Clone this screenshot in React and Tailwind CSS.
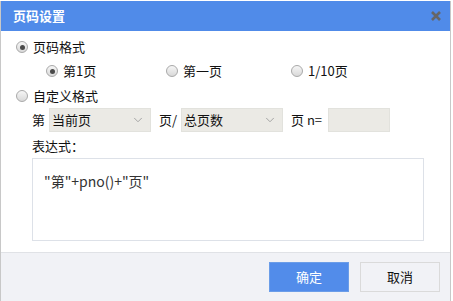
import React from "react";
import { ChevronDown } from "lucide-react";

const font = { fontFamily: '"Noto Sans CJK SC", "Microsoft YaHei", sans-serif' };

function Radio({ checked, label, className = "" }) {
  return (
    <label className={`flex items-center gap-[5px] h-5 ${className}`}>
      <span className="relative flex items-center justify-center w-[12px] h-[12px] rounded-full border border-[#a9a9a9] bg-gradient-to-b from-[#f6f6f6] to-[#d9d9d9]">
        {checked && <span className="w-[5px] h-[5px] rounded-full bg-[#4a4a4a]" />}
      </span>
      <span className="text-[13px] text-[#111] leading-5">{label}</span>
    </label>
  );
}

function Select({ value, className = "" }) {
  return (
    <div className={`flex items-center justify-between h-6 pl-[2px] pr-[5px] bg-[#ebeae5] border border-[#e2e2dd] ${className}`}>
      <span className="text-[13px] text-[#111]">{value}</span>
      <ChevronDown className="w-[14px] h-[14px] text-[#9a9a9a]" strokeWidth={1.5} />
    </div>
  );
}

export default function App() {
  return (
    <div className="w-[453px] h-[301px] bg-white overflow-hidden pt-px" style={font}>
      <div className="w-[451px] h-[300px] flex flex-col border-x border-[#c8c8c8]">
        {/* Title */}
        <div className="h-[30px] shrink-0 flex items-center justify-between bg-[#508be9] pl-[12px] pr-[9px]">
          <span className="text-white font-bold text-[13px]">页码设置</span>
          <svg width="10" height="10" viewBox="0 0 10 10">
            <path d="M1 1L9 9M9 1L1 9" stroke="#666" strokeWidth="2.6" />
          </svg>
        </div>

        {/* Body */}
        <div className="flex-1 flex flex-col bg-white pt-[6px] pl-[15px]">
          <Radio checked label="页码格式" />
          <div className="flex mt-[4px] pl-[30px]">
            <Radio checked label="第1页" className="w-[120px]" />
            <Radio label="第一页" className="w-[125px]" />
            <Radio label="1/10页" />
          </div>
          <Radio label="自定义格式" className="mt-[5px]" />
          <div className="flex items-center mt-[2px] pl-[16px] text-[13px] text-[#111]">
            <span className="w-[17px]">第</span>
            <Select value="当前页" className="w-[102px]" />
            <span className="ml-[8px] w-[22px]">页/</span>
            <Select value="总页数" className="w-[102px]" />
            <span className="ml-[8px] w-[37px]">页 n=</span>
            <div className="w-[62px] h-6 bg-[#ebeae5] border border-[#e2e2dd]" />
          </div>
          <div className="mt-[4px] pl-[16px] h-5 leading-5 text-[13px] text-[#111]">表达式：</div>
          <div className="mt-[2px] ml-[16px] w-[392px] h-[83px] border border-[#dde1e8] bg-white pl-[11px] pt-[12px] text-[14px] text-[#333] leading-5">
            "第"+pno()+"页"
          </div>
        </div>

        {/* Footer */}
        <div className="h-[49px] shrink-0 border-t border-[#e0e2e6] bg-[#f1f2f6] flex items-start justify-end gap-[11px] pt-[9px] pr-[10px]">
          <button className="w-[80px] h-[30px] bg-[#528cea] border border-[#6b9de8] text-white text-[13px]">确定</button>
          <button className="w-[80px] h-[30px] bg-[#f1f2f6] border border-[#dadada] text-[#111] text-[13px]">取消</button>
        </div>
      </div>
    </div>
  );
}
